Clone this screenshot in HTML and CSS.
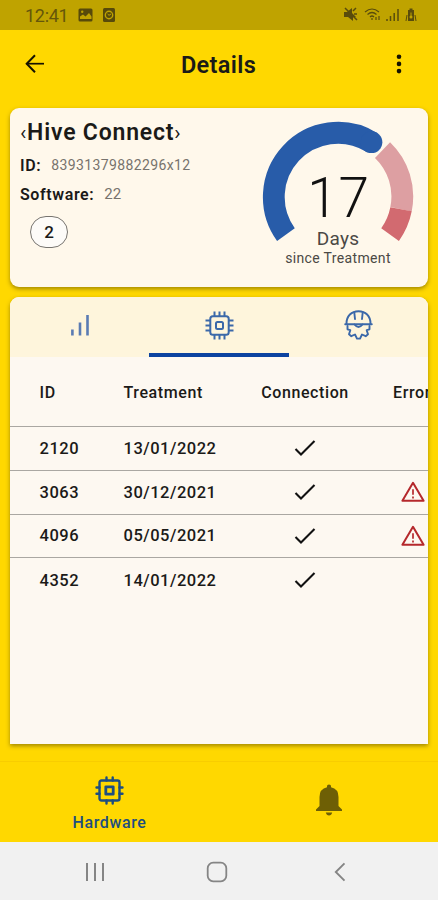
FILE: index.html
```html
<!DOCTYPE html>
<html lang="en">
<head>
<meta charset="utf-8">
<title>Details</title>
<link rel="stylesheet" href="styles.css">
</head>
<body>
<svg class="defs" aria-hidden="true">
  <symbol id="chip" viewBox="0 0 29 29">
    <g fill="none" stroke="currentColor" stroke-linejoin="round">
      <rect x="5.300" y="5.300" width="18.400" height="18.400" rx="2.500"/>
      <rect x="11" y="11" width="7" height="7" rx="1.500"/>
      <path d="M9.500 5V.5M14.500 5V.5M19.500 5V.5M9.500 28.500V24M14.500 28.500V24M19.500 28.500V24M5 9.500H.5M5 14.500H.5M5 19.500H.5M28.500 9.500H24M28.500 14.500H24M28.500 19.500H24"/>
    </g>
  </symbol>
  <symbol id="check" viewBox="0 0 22 18"><path d="M1.500 10L7 15.500L20.500 2" fill="none" stroke="#111" stroke-width="2.100"/></symbol>
  <symbol id="warn" viewBox="0 0 24 22">
    <path d="M12 1.800L22.600 19.800H1.400Z" fill="none" stroke="#b5282c" stroke-width="2" stroke-linejoin="round"/>
    <path d="M12 8.200v5.600M12 15.400v2" stroke="#b5282c" stroke-width="1.700"/>
  </symbol>
</svg>
<div class="screen">
  <div class="status">
    <span class="clock">12:41</span>
    <svg class="s-img" width="15" height="14" viewBox="0 0 15 14"><rect x=".5" y=".5" width="14" height="13" rx="1.500" fill="#574a0a"/><path d="M2 11V8.500l3-2 2.500 2L11 5l2.500 3.500V11z" fill="#bfa300"/><circle cx="4.200" cy="3.800" r="1.200" fill="#bfa300"/></svg>
    <svg class="s-alarm" width="12" height="14" viewBox="0 0 12 14"><rect width="12" height="14" rx="1.500" fill="#574a0a"/><circle cx="6" cy="7" r="3.700" fill="none" stroke="#bfa300" stroke-width="1.400"/><path d="M4.600 6L6 7.300 8 6" fill="none" stroke="#bfa300"/></svg>
    <svg class="s-right" width="74" height="16" viewBox="0 0 74 16" fill="none" stroke="#594c0c">
      <path d="M1 5h3l5-4v5l4 4-3 0v4L5 10H1z" fill="#594c0c" stroke="none"/><path d="M2 1l12 12M10 4l3-3M11 7h3" stroke-width="1.500"/>
      <path d="M22 5q7-6 14 0M24.500 7.500q4.500-4 9 0M27 10q2-2 4 0" stroke-width="1.200"/><path d="M29 11v2M33 13v-3M36 9v4" stroke-width="1.200"/>
      <path d="M44 14v-2M47.500 14V9M51.200 14V6M55 14V2" stroke-width="1.500"/>
      <path d="M65 3h1.500V1.500h3V3H71v11h-6z" fill="#594c0c" stroke="none"/><path d="M63 14l1-6M73 14l-1-6"/><path d="M68 5.500v4" stroke="#bfa300"/><circle cx="68" cy="10" r="1.500" fill="#bfa300" stroke="none"/>
    </svg>
  </div>
  <header class="appbar">
    <svg width="20" height="20" viewBox="0 0 20 20" fill="none" stroke="#161300" stroke-width="2"><path d="M10 1.200L1.700 9.700L10 18.200"/><path d="M1.700 9.700H19" stroke-width="1.700"/></svg>
    <h1>Details</h1>
    <svg width="6" height="20" viewBox="0 0 6 20" fill="#161300"><circle cx="3" cy="2.700" r="2.300"/><circle cx="3" cy="9.900" r="2.300"/><circle cx="3" cy="17.100" r="2.300"/></svg>
  </header>
  <section class="card summary">
    <div class="info">
      <h2><span>‹</span>Hive Connect<span>›</span></h2>
      <p class="line"><b>ID:</b><span class="id-value">83931379882296x12</span></p>
      <p class="line software"><b>Software:</b><span>22</span></p>
      <div class="pill">2</div>
    </div>
    <div class="gauge">
      <svg width="152" height="152" viewBox="-76 -76 152 152" fill="none" stroke-width="21.800">
        <path d="M44.520 -46.930A64.200 64.200 0 0 1 63.020 12.250" stroke="#dd9fa2"/>
        <path d="M63.020 12.250A64.200 64.200 0 0 1 52.070 37.550" stroke="#d26a70"/>
        <path d="M-52.070 37.550A64.200 64.200 0 0 1 33.450 -54.800" stroke="#285ca9"/>
        <circle cx="33.450" cy="-54.800" r="10.900" fill="#285ca9" stroke="none"/>
      </svg>
      <div class="gauge-label"><span class="num">17</span><span class="days">Days</span><span class="since">since Treatment</span></div>
    </div>
  </section>
  <section class="card details">
    <nav class="tabs">
      <div class="tab"><svg width="20" height="22" viewBox="0 0 20 22" stroke="#5a7bb3" stroke-width="2.600"><path d="M2.400 21.500v-6M10 21.500V8.500M17.500 21.500V1"/></svg></div>
      <div class="tab active"><svg width="29" height="29" stroke-width="2"><use href="#chip"/></svg></div>
      <div class="tab"><svg width="29" height="30" viewBox="0 0 29 30" fill="none" stroke="#3b68a9" stroke-width="1.900" stroke-linejoin="round" stroke-linecap="round">
        <path d="M2.500 13.500C2.500 6 7.500 1.200 14.500 1.200S26.500 6 26.500 13.500M1.200 14.300H27.800"/>
        <path d="M10.300 2.500L11 9M18.700 2.500L18 9"/>
        <path d="M10.500 14.500Q14.500 19.500 18.500 14.500"/>
        <path d="M3.500 16V19.300L6.300 20.200L5 24.300L7.300 26.200L11 24.500L13 28.600H16L18 24.500L21.700 26.200L24 24.300L22.700 20.200L25.500 19.300V16"/>
      </svg></div>
    </nav>
    <div class="table">
      <div class="row head"><span>ID</span><span>Treatment</span><span class="mid">Connection</span><span>Error</span></div>
      <div class="row"><span>2120</span><span>13/01/2022</span><span class="mid"><svg width="22" height="18"><use href="#check"/></svg></span><span></span></div>
      <div class="row"><span>3063</span><span>30/12/2021</span><span class="mid"><svg width="22" height="18"><use href="#check"/></svg></span><span class="err"><svg width="24" height="22"><use href="#warn"/></svg></span></div>
      <div class="row"><span>4096</span><span>05/05/2021</span><span class="mid"><svg width="22" height="18"><use href="#check"/></svg></span><span class="err"><svg width="24" height="22"><use href="#warn"/></svg></span></div>
      <div class="row"><span>4352</span><span>14/01/2022</span><span class="mid"><svg width="22" height="18"><use href="#check"/></svg></span><span></span></div>
    </div>
  </section>
  <nav class="bottom">
    <div class="item on">
      <svg width="29" height="29" viewBox="0 0 29 29" fill="none" stroke="#1d4e80" stroke-width="2.400" stroke-linejoin="round" stroke-linecap="round"><rect x="4.500" y="4.500" width="20" height="20" rx="2"/><rect x="10.800" y="10.800" width="7.400" height="7.400" stroke-width="2.800"/><path d="M11.500 4.500v-3M17.700 4.500v-3M11.500 27.500v-3M17.700 27.500v-3M4.500 11.500h-3M4.500 17.700h-3M27.500 11.500h-3M27.500 17.700h-3"/></svg>
      <span>Hardware</span>
    </div>
    <div class="item"><svg width="26" height="32" viewBox="0 0 26 32" fill="#6e5f05"><path d="M11 3.300V2Q11 .5 13 .5T15 2V3.300Q22.500 5 22.500 13V22L26 25.500V27H0V25.500L3.500 22V13Q3.500 5 11 3.300ZM9.800 28.500H16.200Q15.500 31.500 13 31.500T9.800 28.500Z"/></svg></div>
  </nav>
  <div class="system">
    <svg width="20" height="20" viewBox="0 0 20 20" stroke="#858585" stroke-width="2"><path d="M2 1v18M10 1v18M18 1v18"/></svg>
    <svg class="home" width="22" height="22" viewBox="0 0 22 22" fill="none" stroke="#858585" stroke-width="1.800"><rect x="1.700" y="1.700" width="18.600" height="18.600" rx="5.500"/></svg>
    <svg width="12" height="20" viewBox="0 0 12 20" fill="none" stroke="#858585" stroke-width="1.900"><path d="M10.500 1.300L1.800 10L10.500 18.700"/></svg>
  </div>
</div>
</body>
</html>
```
FILE: styles.css
```css
* { box-sizing: border-box; margin: 0; padding: 0; }
body { width: 438px; height: 900px; overflow: hidden; font-family: Roboto, "Liberation Sans", sans-serif; color: #1b1a18; }
svg { display: block; flex: none; }
.defs { display: none; }
.screen { display: flex; flex-direction: column; height: 900px; background: #ffd800; }

.status { display: flex; align-items: center; height: 30px; padding: 0 21px 0 25px; background: #bfa300; color: #65560a; }
.clock { width: 53px; font-size: 18px; letter-spacing: -.3px; }
.s-alarm { margin-left: 10px; }
.s-right { margin-left: auto; }

.appbar { display: flex; align-items: center; justify-content: space-between; height: 78px; padding: 0 36px 10px 25px; }
.appbar h1 { margin: 2px 0 0 -4px; font-size: 23.500px; font-weight: 600; letter-spacing: .35px; }

.card { margin: 0 10px; box-shadow: 0 2px 4px rgba(70, 55, 0, .5); overflow: hidden; }
.summary { display: flex; justify-content: space-between; flex: none; height: 179px; border-radius: 9px; background: #fff8eb; padding: 11px 14px 0 10px; }
.info h2 { height: 27px; font-size: 23px; line-height: 27px; font-weight: 600; letter-spacing: .8px; white-space: nowrap; }
.info h2 span { font-weight: 400; font-size: 21px; }
.line { display: flex; align-items: center; height: 20px; margin-top: 9px; font-size: 16px; }
.line b { font-weight: 600; letter-spacing: .6px; }
.line span { margin-left: 10px; font-size: 15px; color: #77736d; }
.line .id-value { font-size: 14px; letter-spacing: .38px; }
.software { margin-top: 9px; }
.pill { display: flex; align-items: center; justify-content: center; width: 38px; height: 32px; margin: 12px 0 0 10px; border: 1px solid #77746f; border-radius: 16px; background: #fdfbf8; font-size: 17px; font-weight: 500; }
.gauge { position: relative; width: 152px; margin-top: 2px; }
.gauge-label { position: absolute; inset: 0; display: flex; flex-direction: column; align-items: center; color: #4b4945; white-space: nowrap; }
.num { margin: 47px 0 0 1px; font-size: 55px; line-height: 60px; font-weight: 350; letter-spacing: .8px; color: #111; }
.days { font-size: 19px; line-height: 22px; letter-spacing: .3px; }
.since { font-size: 14px; line-height: 16px; letter-spacing: .35px; }

.details { flex: none; height: 447px; margin-top: 10px; border-radius: 9px 9px 0 0; background: #fdf8f1; }
.tabs { display: grid; grid-template-columns: repeat(3, 1fr); height: 60px; background: #fef5dc; }
.tab { display: flex; align-items: center; justify-content: center; border-bottom: 4px solid transparent; }
.tab svg { margin-left: 1px; }
.active { border-color: #0c43a0; color: #3b68a9; }
.table { width: 460px; font-size: 16.500px; font-weight: 500; }
.row { display: grid; grid-template-columns: 84px 127px 109px 80px; align-items: center; height: 43.800px; padding-left: 29.500px; letter-spacing: .5px; border-bottom: 1px solid #aaa7a2; }
.row:last-child { border-bottom: 0; }
.head { height: 70px; padding-top: 1px; font-size: 16px; letter-spacing: .6px; }
.mid { display: flex; justify-content: center; }
.head span:last-child { padding-left: 33.500px; }
.err { padding-left: 41px; }

.bottom { display: flex; align-items: center; height: 81px; margin-top: 17px; border-top: 1px solid #f8cd00; }
.item { display: flex; flex-direction: column; align-items: center; justify-content: center; flex: 1; color: #1d4e80; padding-bottom: 4px; }
.item.on { padding: 4px 0 0; }
.item span { margin-top: 9px; font-size: 16px; line-height: 18px; font-weight: 500; letter-spacing: .6px; }
.system { display: flex; justify-content: space-between; align-items: center; flex: 1; padding: 2px 92px 0 85px; background: #f1f1f1; }
.home { margin-right: 5px; }
```
